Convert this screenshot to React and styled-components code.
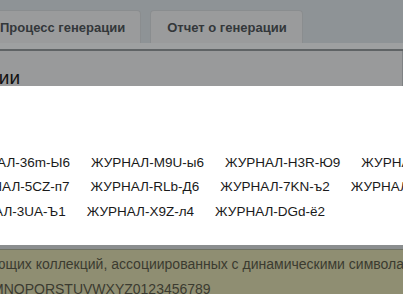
import React from "react";
import styled, { createGlobalStyle } from "styled-components";

const GlobalStyle = createGlobalStyle`
  html, body {
    margin: 0;
    padding: 0;
    background: #8e9396;
    overflow: hidden;
  }
  body {
    font-family: "Liberation Sans", Arial, sans-serif;
  }
  * {
    box-sizing: border-box;
  }
`;

const Page = styled.div`
  position: relative;
  display: flex;
  flex-direction: column;
  width: 403px;
  height: 294px;
  overflow: hidden;
`;

const TabBar = styled.div`
  flex: none;
  display: flex;
  align-items: flex-end;
  gap: 9px;
  height: 43px;
  margin-left: -17px;
`;

const Tab = styled.div`
  display: flex;
  align-items: center;
  padding: 0 15px 0 16px;
  height: 33px;
  background: #9a9b9c;
  border: 1px solid #8a8d8f;
  border-bottom: none;
  border-radius: 4px 4px 0 0;
  font-size: 13px;
  font-weight: 700;
  color: #33373a;
  white-space: nowrap;
`;

const Strip = styled.div`
  flex: none;
  height: ${(p) => p.$h || 8}px;
  background: ${(p) => p.$bg || "#9ea0a1"};
  border-bottom: ${(p) => p.$lw || 2}px solid ${(p) => p.$line || "#5f6365"};
`;

const Panel = styled.div`
  flex: none;
  height: 194px;
  background: #999a9b;
  border-right: 1px solid #7f8284;
  padding-top: 16px;
`;

const Heading = styled.h2`
  margin: 0 0 0 -146px;
  font-size: 19px;
  font-weight: 400;
  color: #111;
  white-space: nowrap;
`;

const InfoPanel = styled.div`
  flex: 1;
  background: #8f8e72;
  padding-top: 2px;
  font-size: 14px;
  color: #3b3b30;
  line-height: 25px;
`;

const InfoLine = styled.div`
  white-space: nowrap;
  margin-left: ${(p) => p.$shift || 0}px;
`;

const Modal = styled.div`
  position: absolute;
  left: -80px;
  top: 86px;
  width: 540px;
  height: 159px;
  background: #fff;
  padding: 64px 0 0 35px;
`;

const Row = styled.div`
  display: flex;
  gap: 21px;
  height: 24.5px;
  align-items: center;
  white-space: nowrap;
  margin-left: ${(p) => p.$shift || 0}px;
`;

const Journal = styled.span`
  font-size: 13.5px;
  color: #1a1a1a;
`;

const rows = [
  { shift: 2, items: ["ЖУРНАЛ-36m-Ы6", "ЖУРНАЛ-M9U-ы6", "ЖУРНАЛ-H3R-Ю9", "ЖУРНАЛ-Q2w-Ф4"] },
  { shift: 7, items: ["ЖУРНАЛ-5CZ-п7", "ЖУРНАЛ-RLb-Д6", "ЖУРНАЛ-7KN-ъ2", "ЖУРНАЛ-T8s-Щ3"] },
  { shift: -1, items: ["ЖУРНАЛ-3UA-Ъ1", "ЖУРНАЛ-X9Z-л4", "ЖУРНАЛ-DGd-ё2"] },
];

export default function App() {
  return (
    <Page>
      <GlobalStyle />
      <TabBar>
        <Tab>Процесс генерации</Tab>
        <Tab>Отчет о генерации</Tab>
      </TabBar>
      <Strip />
      <Panel>
        <Heading>Журнал генерации</Heading>
      </Panel>
      <Strip $h={5} $lw={1} $bg="#8b8e8f" $line="#6f7264" />
      <InfoPanel>
        <InfoLine $shift={-5}>ющих коллекций, ассоциированных с динамическими символами</InfoLine>
        <InfoLine $shift={-8}>MNOPQRSTUVWXYZ0123456789</InfoLine>
      </InfoPanel>
      <Modal>
        {rows.map((r, i) => (
          <Row key={i} $shift={r.shift}>
            {r.items.map((t) => (
              <Journal key={t}>{t}</Journal>
            ))}
          </Row>
        ))}
      </Modal>
    </Page>
  );
}
